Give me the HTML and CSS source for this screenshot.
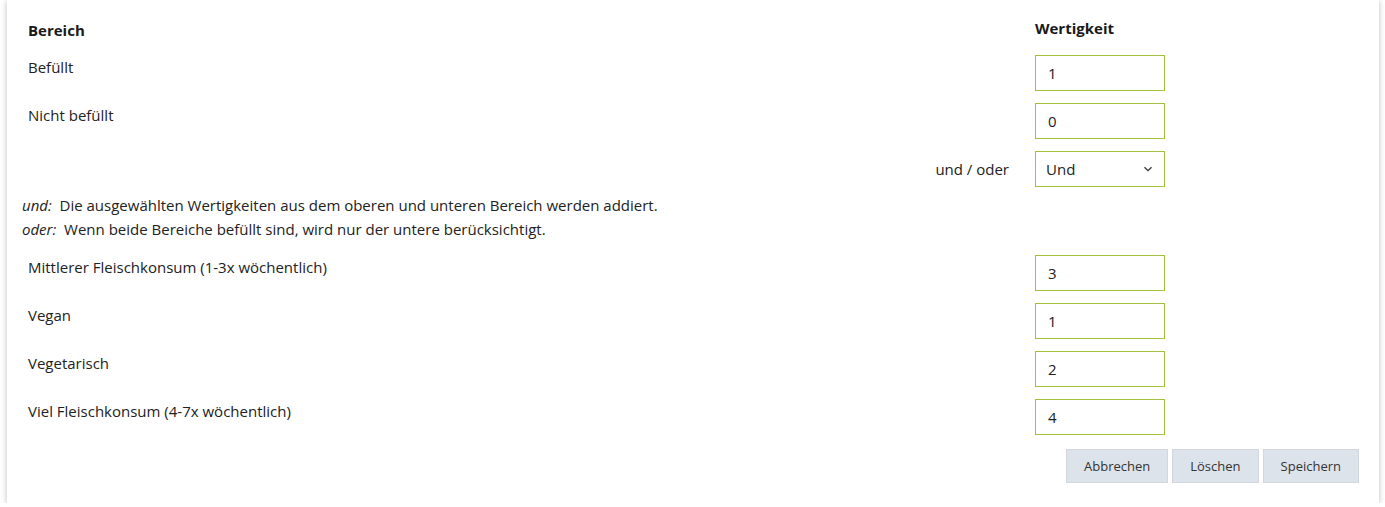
FILE: index.html
```html
<!DOCTYPE html>
<html lang="de">
<head>
    <meta charset="UTF-8">
    <meta name="viewport" content="width=device-width, initial-scale=1.0">
    <title>Wertigkeit</title>
    <link rel="stylesheet" href="styles.css">
</head>
<body>
    <div class="card">
        <div class="head-row">
            <span class="label">Bereich</span>
            <span class="control">Wertigkeit</span>
        </div>

        <div class="row">
            <label class="label" for="befuellt">Befüllt</label>
            <input class="control field" type="text" id="befuellt" value="1">
        </div>
        <div class="row">
            <label class="label" for="nicht-befuellt">Nicht befüllt</label>
            <input class="control field" type="text" id="nicht-befuellt" value="0">
        </div>
        <div class="row select-row">
            <label class="label right" for="verknuepfung">und / oder</label>
            <div class="control field select">
                <span>Und</span>
                <svg width="10" height="6" viewBox="0 0 10 6"><path d="M1.5 1.2 5 4.6 8.5 1.2" fill="none" stroke="#333" stroke-width="1.3"/></svg>
            </div>
        </div>

        <div class="note">
            <p><em>und:</em>&nbsp; Die ausgewählten Wertigkeiten aus dem oberen und unteren Bereich werden addiert.</p>
            <p><em>oder:</em>&nbsp; Wenn beide Bereiche befüllt sind, wird nur der untere berücksichtigt.</p>
        </div>

        <div class="row">
            <label class="label" for="mittel">Mittlerer Fleischkonsum (1-3x wöchentlich)</label>
            <input class="control field" type="text" id="mittel" value="3">
        </div>
        <div class="row">
            <label class="label" for="vegan">Vegan</label>
            <input class="control field" type="text" id="vegan" value="1">
        </div>
        <div class="row">
            <label class="label" for="vegetarisch">Vegetarisch</label>
            <input class="control field" type="text" id="vegetarisch" value="2">
        </div>
        <div class="row">
            <label class="label" for="viel">Viel Fleischkonsum (4-7x wöchentlich)</label>
            <input class="control field" type="text" id="viel" value="4">
        </div>

        <div class="actions">
            <button type="button">Abbrechen</button>
            <button type="button">Löschen</button>
            <button type="button">Speichern</button>
        </div>
    </div>
</body>
</html>
```

FILE: styles.css
```css
body {
    margin: 0;
    background-color: #fff;
    font-family: "Open Sans", "Noto Sans", sans-serif;
    font-size: 15px;
    color: #222;
}

.card {
    width: 1372px;
    height: 503px;
    margin-left: 7px;
    box-sizing: border-box;
    padding-top: 18px;
    background-color: #fff;
    box-shadow: 0 1px 6px rgba(0, 0, 0, 0.26);
}

.head-row,
.row {
    display: flex;
    padding-left: 21px;
    padding-right: 214px;
}

.head-row {
    height: 20px;
    line-height: 20px;
    margin-bottom: 17px;
    font-weight: bold;
    color: #1a1a1a;
}

.row {
    height: 36px;
    margin-bottom: 12px;
}

.label {
    flex: 1;
    line-height: 20px;
    padding-top: 2px;
}

.label.right {
    text-align: right;
    padding-top: 0;
    padding-right: 26px;
}

.select-row {
    align-items: center;
    margin-bottom: 6px;
}

.control {
    width: 130px;
    flex: none;
}

.field {
    height: 36px;
    box-sizing: border-box;
    border: 1px solid #a1c23c;
    padding: 0 12px;
    font-family: inherit;
    font-size: 15px;
    color: #222;
    background-color: #fff;
    outline: none;
}

.select {
    display: flex;
    align-items: center;
    justify-content: space-between;
    padding: 0 11px 0 10px;
}

.note {
    padding-left: 15px;
    margin-bottom: 14px;
    line-height: 24px;
}

.note p {
    margin: 0;
}

.actions {
    display: flex;
    justify-content: flex-end;
    gap: 4px;
    padding-right: 20px;
    margin-top: 14px;
}

.actions button {
    height: 34px;
    padding: 0 17px;
    background-color: #dde3ea;
    border: 1px solid #d3d7dc;
    font-family: inherit;
    font-size: 13px;
    color: #333;
    cursor: pointer;
}
```
